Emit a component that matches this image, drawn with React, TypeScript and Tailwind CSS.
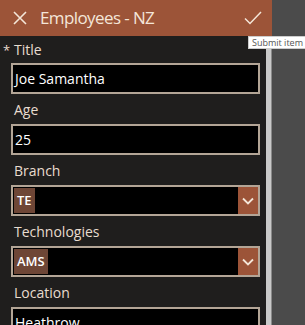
import React from 'react';

const font = { fontFamily: '"Open Sans", "Noto Sans", sans-serif' };

function Label({ text, required }: { text: string; required?: boolean }) {
  return (
    <div
      className={
        'relative shrink-0 flex items-center pl-[14px] text-[14px] text-[#e8dccf] ' +
        (required ? 'h-[27px]' : 'h-[30px]')
      }
    >
      {required && <span className="absolute left-[3px] top-[5px] text-[13px]">*</span>}
      {text}
    </div>
  );
}

function TextBox({ value }: { value: string }) {
  return (
    <div className="h-[31px] shrink-0 ml-[11px] w-[249px] border-2 border-[#b3a596] bg-black flex items-center pl-[2px] text-[14px] text-white">
      {value}
    </div>
  );
}

function Combo({ chip }: { chip: string }) {
  return (
    <div className="h-[31px] shrink-0 ml-[11px] w-[249px] border-2 border-[#b3a596] bg-black flex items-stretch">
      <div className="flex-1 flex items-center pl-[1px]">
        <span className="h-[25px] px-[3px] flex items-center bg-[#6e4636] text-white text-[13px] font-semibold">
          {chip}
        </span>
      </div>
      <div className="w-[20px] bg-[#9c5438] flex items-center justify-center">
        <svg width="12" height="8" viewBox="0 0 12 8" fill="none">
          <path d="M1 1.5 L6 6.5 L11 1.5" stroke="#f4e6d8" strokeWidth="1.8" />
        </svg>
      </div>
    </div>
  );
}

export default function App() {
  return (
    <div className="relative w-[305px] h-[325px] bg-[#4b4b4b] flex overflow-hidden" style={font}>
      <div className="w-[272px] flex flex-col">
        <div className="h-[36px] shrink-0 bg-[#9c5438] flex items-center text-[#f4e6d8]">
          <svg className="ml-[13px]" width="14" height="14" viewBox="0 0 14 14" fill="none">
            <path d="M1 1 L13 13 M13 1 L1 13" stroke="#f4e6d8" strokeWidth="1.6" />
          </svg>
          <span className="ml-[13px] text-[17px] leading-[22px] tracking-[-0.6px]">Employees - NZ</span>
          <svg className="ml-auto mr-[10px]" width="18" height="14" viewBox="0 0 18 14" fill="none">
            <path d="M1 7.5 L6 12.5 L17 1" stroke="#f4e6d8" strokeWidth="1.5" />
          </svg>
        </div>
        <div className="flex-1 min-h-0 overflow-hidden bg-[#1f1e1d] flex">
          <div className="w-[266px] flex flex-col">
            <Label text="Title" required />
            <TextBox value="Joe Samantha" />
            <Label text="Age" />
            <TextBox value="25" />
            <Label text="Branch" />
            <Combo chip="TE" />
            <Label text="Technologies" />
            <Combo chip="AMS" />
            <Label text="Location" />
            <TextBox value="Heathrow" />
          </div>
          <div className="w-[5px] bg-[#c9c9c9]" />
          <div className="w-[1px] bg-[#8a8a8a]" />
        </div>
      </div>
      <div className="absolute left-[248px] top-[36px] h-[13px] px-[3px] whitespace-nowrap bg-white border border-[#cccccc] text-[9px] leading-[11px] text-[#555555]">
        Submit item
      </div>
    </div>
  );
}
